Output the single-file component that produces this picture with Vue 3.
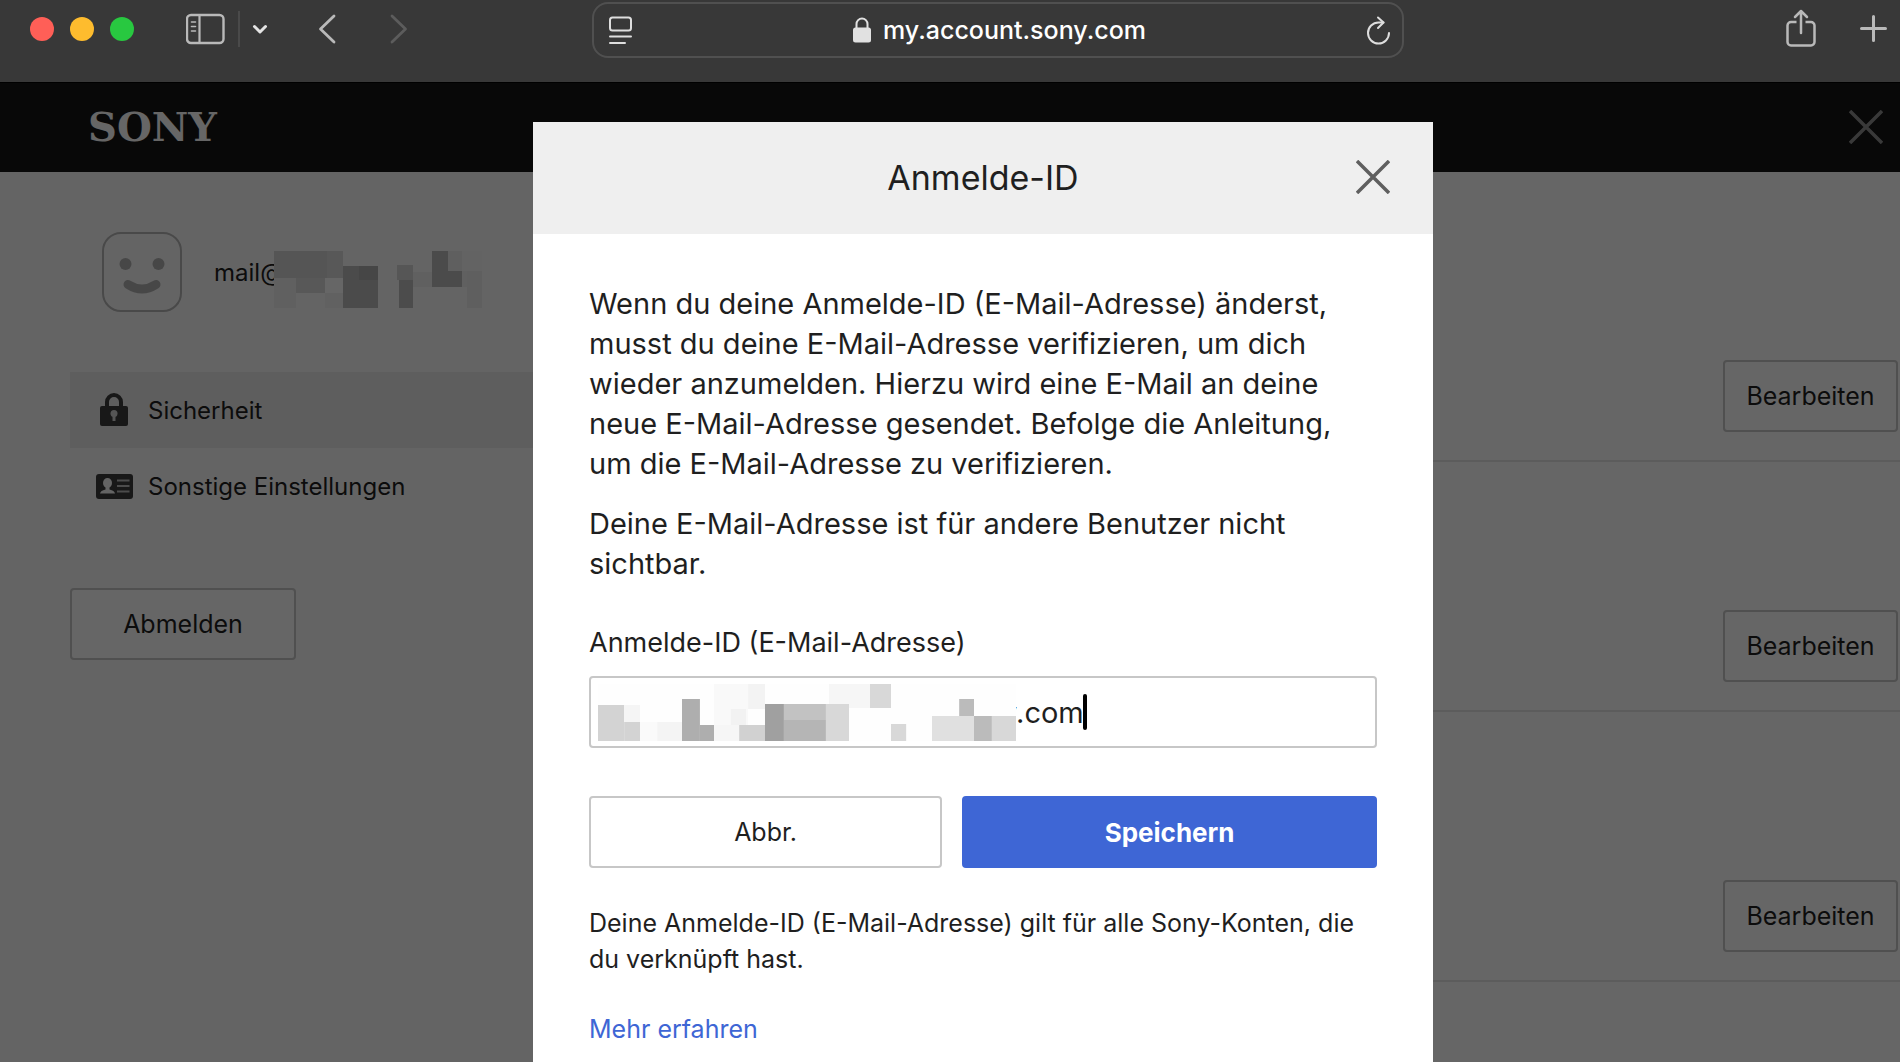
<template>
    <div class="browser">

        <header class="toolbar">
            <div class="traffic">
                <span class="light red"></span>
                <span class="light yellow"></span>
                <span class="light green"></span>
            </div>

            <div class="nav">
                <button class="icon-btn" aria-label="Seitenleiste">
                    <svg width="40" height="32" viewBox="0 0 40 32" fill="none" stroke="#b9b9b9">
                        <rect x="1" y="2" width="36.5" height="28" rx="4" stroke-width="2.4" />
                        <path d="M13.500 2v28" stroke-width="2.2" />
                        <path d="M5.500 9h4M5.500 13.500h4M5.500 18h4" stroke-width="1.6" stroke-linecap="round" />
                    </svg>
                </button>
                <span class="divider"></span>
                <button class="icon-btn" aria-label="Tabgruppen">
                    <svg width="16" height="12" viewBox="0 0 16 12" fill="none" stroke="#e4e4e4" stroke-width="3"
                        stroke-linecap="round" stroke-linejoin="round">
                        <path d="M2.500 3.500l5.500 5.500 5.500-5.500" />
                    </svg>
                </button>
            </div>

            <div class="history">
                <button class="icon-btn" aria-label="Zurück">
                    <svg width="18" height="30" viewBox="0 0 18 30" fill="none" stroke="#b9b9b9" stroke-width="2.800"
                        stroke-linecap="round" stroke-linejoin="round">
                        <path d="M16 2L2.500 15L16 28" />
                    </svg>
                </button>
                <button class="icon-btn" aria-label="Vorwärts" disabled>
                    <svg width="18" height="30" viewBox="0 0 18 30" fill="none" stroke="#5c5c5c" stroke-width="2.800"
                        stroke-linecap="round" stroke-linejoin="round">
                        <path d="M2 2L15.500 15L2 28" />
                    </svg>
                </button>
            </div>

            <div class="address">
                <svg width="24" height="30" viewBox="0 0 24 30" fill="none" stroke="#dedede" stroke-width="2"
                    stroke-linecap="round">
                    <rect x="1" y="2.500" width="21" height="13" rx="2.500" />
                    <path d="M1 21.500h21M1 28h15" />
                </svg>
                <div class="host">
                    <svg width="18" height="26" viewBox="0 0 18 26">
                        <path d="M3.500 12V7a5.500 5.500 0 0 1 11 0v5" fill="none" stroke="#e1e1e1" stroke-width="2" />
                        <rect x="0" y="10.500" width="18" height="15" rx="2.500" fill="#e1e1e1" />
                    </svg>
                    <span>my.account.sony.com</span>
                </div>
                <button class="icon-btn" aria-label="Neu laden">
                    <svg width="24" height="30" viewBox="0 0 24 30" fill="none" stroke="#dedede" stroke-width="2"
                        stroke-linecap="round" stroke-linejoin="round">
                        <path d="M17.500 7.500H12.500A10.500 10.500 0 1 0 23 18" />
                        <path d="M12 2.500l5.500 5-5.500 5.500" />
                    </svg>
                </button>
            </div>

            <div class="actions">
                <button class="icon-btn" aria-label="Teilen">
                    <svg width="30" height="40" viewBox="0 0 30 40" fill="none" stroke="#b9b9b9" stroke-width="2.500"
                        stroke-linecap="round" stroke-linejoin="round">
                        <path d="M10.500 13H5a3.500 3.500 0 0 0-3.500 3.500v16.500A3.500 3.500 0 0 0 5 36.500h20a3.500 3.500 0 0 0 3.500-3.500V16.500a3.500 3.500 0 0 0-3.500-3.500h-5.500"
                            stroke-linecap="butt" />
                        <path d="M15 24V2M9 8l6-6 6 6" />
                    </svg>
                </button>
                <button class="icon-btn" aria-label="Neuer Tab">
                    <svg width="28" height="30" viewBox="0 0 28 30" fill="none" stroke="#b9b9b9" stroke-width="3"
                        stroke-linecap="round">
                        <path d="M13.500 2.500v24M1.500 14.500h24" />
                    </svg>
                </button>
            </div>
        </header>

        <div class="site">
            <div class="site-header">
                <a class="logo" href="#">SONY</a>
                <button class="icon-btn" aria-label="Seite schließen">
                    <svg width="34" height="34" viewBox="0 0 34 34" stroke="#8f8f8f" stroke-width="3.500">
                        <path d="M1 1l32 32M33 1L1 33" />
                    </svg>
                </button>
            </div>

            <div class="site-body">
                <aside class="sidebar">
                    <div class="profile">
                        <svg width="80" height="80" viewBox="0 0 80 80" fill="none">
                            <rect x="1" y="1" width="78" height="78" rx="18" stroke="#b6b6b6" stroke-width="2" />
                            <circle cx="23.500" cy="32" r="6" fill="#b2b2b2" />
                            <circle cx="56.500" cy="32" r="6" fill="#b2b2b2" />
                            <path d="M26 52.500Q40 61.500 54 52.500" stroke="#b2b2b2" stroke-width="9"
                                stroke-linecap="round" />
                        </svg>
                        <div class="account">
                            <span>mail@</span>
                            <svg class="account-mask" width="208" height="57" viewBox="0 0 624 171">
                                <rect width="624" height="171" fill="#fafafa" />
                                <rect v-for="(r, i) in accountBlocks" :key="i" :x="r[0]" :y="r[1]" :width="r[2]"
                                    :height="r[3]" :fill="r[4]" />
                            </svg>
                        </div>
                    </div>

                    <nav class="menu">
                        <a class="menu-item active" href="#">
                            <svg width="38" height="34" viewBox="0 0 38 34">
                                <path d="M12 15V9a7 7 0 0 1 14 0v6" fill="none" stroke="#3c3c3c" stroke-width="4" />
                                <rect x="5" y="13" width="28" height="20" rx="2" fill="#3c3c3c" />
                                <circle cx="19" cy="20.500" r="3.500" fill="#d5d5d5" />
                                <path d="M17.500 22h3v6h-3z" fill="#d5d5d5" />
                            </svg>
                            <span>Sicherheit</span>
                        </a>
                        <a class="menu-item" href="#">
                            <svg width="38" height="26" viewBox="0 0 38 26">
                                <rect x="1" y="1" width="37" height="25" rx="3" fill="#3c3c3c" />
                                <ellipse cx="12.500" cy="10" rx="4.500" ry="5" fill="#fafafa" />
                                <path d="M10.500 13h4v3.500q5 1 5.500 4H5q.5-3 5.500-4z" fill="#fafafa" />
                                <path d="M22 7.500h12.500M22 13h12.500M22 18.500h12.500" stroke="#bdbdbd" stroke-width="2" />
                            </svg>
                            <span>Sonstige Einstellungen</span>
                        </a>
                    </nav>

                    <button class="btn logout">Abmelden</button>
                </aside>

                <main class="settings">
                    <section v-for="row in rows" :key="row" class="setting" :class="row">
                        <button class="btn edit">Bearbeiten</button>
                    </section>
                </main>
            </div>

            <div class="overlay">
                <div class="modal" role="dialog" aria-labelledby="dialog-title">
                    <div class="modal-header">
                        <h1 id="dialog-title">Anmelde-ID</h1>
                        <button class="icon-btn modal-close" aria-label="Schließen">
                            <svg width="34" height="34" viewBox="0 0 34 34" stroke="#5f5f5f" stroke-width="3.500">
                                <path d="M1 1l32 32M33 1L1 33" />
                            </svg>
                        </button>
                    </div>

                    <form class="modal-body" @submit.prevent>
                        <p>Wenn du deine Anmelde-ID (E-Mail-Adresse) änderst, musst du deine E-Mail-Adresse
                            verifizieren, um dich wieder anzumelden. Hierzu wird eine E-Mail an deine neue
                            E-Mail-Adresse gesendet. Befolge die Anleitung, um die E-Mail-Adresse zu verifizieren.</p>
                        <p>Deine E-Mail-Adresse ist für andere Benutzer nicht sichtbar.</p>

                        <label for="login-id">Anmelde-ID (E-Mail-Adresse)</label>
                        <div class="field">
                            <input id="login-id" v-model="loginId" type="text">
                            <svg class="field-mask" width="418" height="57" viewBox="0 0 1214 171"
                                preserveAspectRatio="none">
                                <rect width="1214" height="171" fill="#fefefe" />
                                <rect v-for="(r, i) in fieldBlocks" :key="i" :x="r[0]" :y="r[1]" :width="r[2]"
                                    :height="r[3]" :fill="r[4]" />
                            </svg>
                            <span class="caret"></span>
                        </div>

                        <div class="buttons">
                            <button type="button" class="btn cancel">Abbr.</button>
                            <button type="submit" class="btn save">Speichern</button>
                        </div>

                        <p class="note">Deine Anmelde-ID (E-Mail-Adresse) gilt für alle Sony-Konten, die du verknüpft
                            hast.</p>
                        <a class="more" href="#">Mehr erfahren</a>
                    </form>
                </div>
            </div>
        </div>

    </div>
</template>

<script setup>
import { ref } from 'vue';

const loginId = ref('y.com');

const rows = ['first', 'second', 'third'];

// Pixelated blocks: x, y, width, height, colour
const accountBlocks = [
    [0, 0, 159, 81, '#d4d4d4'],
    [159, 0, 48, 81, '#dcdcdc'],
    [66, 81, 87, 45, '#dcdcdc'],
    [0, 81, 66, 90, '#f0f0f0'],
    [153, 81, 54, 45, '#ffffff'],
    [153, 126, 54, 45, '#f2f2f2'],
    [207, 45, 105, 126, '#bbbbbb'],
    [255, 45, 57, 42, '#afafaf'],
    [369, 42, 48, 45, '#d7d7d7'],
    [375, 87, 42, 84, '#bebebe'],
    [417, 63, 57, 45, '#f0f0f0'],
    [474, 0, 48, 108, '#bbbbbb'],
    [522, 0, 42, 60, '#ededed'],
    [522, 60, 42, 48, '#bbbbbb'],
    [564, 0, 60, 60, '#f7f7f7'],
    [564, 60, 60, 48, '#f0f0f0'],
    [579, 60, 45, 111, '#ededed']
];

const fieldBlocks = [
    [0, 63, 76, 108, '#d3d3d3'],
    [76, 63, 46, 51, '#f5f5f5'],
    [76, 114, 46, 57, '#d3d3d3'],
    [122, 114, 50, 57, '#fafafa'],
    [172, 114, 72, 57, '#f4f4f4'],
    [244, 45, 52, 126, '#aeaeae'],
    [296, 123, 41, 48, '#aeaeae'],
    [337, 0, 99, 123, '#f9f9f9'],
    [436, 0, 49, 75, '#f3f3f3'],
    [386, 75, 44, 48, '#f2f2f2'],
    [337, 123, 73, 48, '#f6f6f6'],
    [410, 123, 75, 48, '#d1d1d1'],
    [671, 0, 119, 72, '#f6f6f6'],
    [485, 60, 55, 111, '#a0a0a0'],
    [540, 60, 122, 48, '#c2c2c2'],
    [540, 108, 122, 63, '#b5b5b5'],
    [662, 60, 67, 111, '#d8d8d8'],
    [790, 0, 61, 72, '#d8d8d8'],
    [851, 120, 44, 51, '#d8d8d8'],
    [970, 96, 122, 75, '#e0e0e0'],
    [1049, 45, 43, 51, '#bbbbbb'],
    [1092, 96, 52, 75, '#bbbbbb'],
    [1144, 96, 70, 75, '#d8d8d8']
];
</script>

<style>
body {
    margin: 0;
    background: #666;
}
</style>

<style scoped>
* {
    box-sizing: border-box;
}

.browser {
    display: flex;
    flex-direction: column;
    height: 100vh;
    overflow: hidden;
    font-family: Inter, 'Liberation Sans', sans-serif;
    color: #1f1f1f;
}

svg {
    display: block;
    flex-shrink: 0;
}

.icon-btn {
    display: flex;
    padding: 0;
    border: none;
    background: none;
    cursor: pointer;
}

/* TOOLBAR */
.toolbar {
    display: flex;
    align-items: center;
    flex-shrink: 0;
    padding: 0 12px 24px 30px;
    background: #383838;
    border-bottom: 1px solid #000;
}

.traffic {
    display: flex;
    gap: 16px;
}

.light {
    width: 24px;
    height: 24px;
    border-radius: 50%;
}

.red {
    background: #ff5f57;
}

.yellow {
    background: #febc2e;
}

.green {
    background: #28c840;
}

.nav {
    display: flex;
    align-items: center;
    gap: 12px;
    margin-left: 52px;
}

.divider {
    width: 2px;
    height: 36px;
    background: #4a4a4a;
}

.history {
    display: flex;
    gap: 54px;
    margin-left: 50px;
}

.address {
    display: flex;
    align-items: center;
    justify-content: space-between;
    flex: 1;
    height: 56px;
    margin: 2px 0 0 184px;
    padding: 0 12px 0 15px;
    border: 2px solid #505050;
    border-radius: 16px;
}

.host {
    display: flex;
    align-items: center;
    gap: 12px;
    color: #fff;
    font-size: 25px;
    font-weight: 500;
}

.actions {
    display: flex;
    align-items: center;
    gap: 44px;
    margin-left: 382px;
}

/* SITE */
.site {
    position: relative;
    display: flex;
    flex-direction: column;
    flex: 1;
    min-height: 0;
}

.site-header {
    display: flex;
    align-items: center;
    justify-content: space-between;
    flex-shrink: 0;
    height: 89px;
    padding: 0 17px 2px 88px;
    background: #141414;
}

.logo {
    color: #fff;
    font-family: 'DejaVu Serif', serif;
    font-size: 40px;
    font-weight: bold;
    line-height: 48px;
    text-decoration: none;
}

.site-body {
    display: flex;
    flex: 1;
    background: #fff;
}

.sidebar {
    flex: 0 0 533px;
    padding: 60px 0 0 70px;
    background: #fafafa;
}

.profile {
    display: flex;
    align-items: center;
    gap: 32px;
    padding-left: 32px;
}

.account {
    position: relative;
    font-size: 24px;
}

.account-mask {
    position: absolute;
    top: -7px;
    left: 60px;
}

.menu {
    margin-top: 60px;
}

.menu-item {
    display: flex;
    align-items: center;
    gap: 15px;
    height: 76px;
    padding-left: 25px;
    color: #1f1f1f;
    font-size: 24px;
    text-decoration: none;
}

.menu-item.active {
    background: #ebebeb;
}

.btn {
    height: 72px;
    padding: 0;
    border: 2px solid #c7c7c7;
    border-radius: 4px;
    background: #fff;
    color: #1f1f1f;
    font-family: inherit;
    font-size: 25px;
    cursor: pointer;
}

.logout {
    width: 226px;
    margin-top: 64px;
}

.settings {
    flex: 1;
}

.setting {
    display: flex;
    justify-content: flex-end;
    padding: 148px 2px 28px 0;
    border-bottom: 2px solid #e6e6e6;
}

.setting.first {
    padding-top: 188px;
}

.setting.third {
    padding-top: 168px;
}

.edit {
    width: 175px;
}

/* DIALOG */
.overlay {
    position: absolute;
    inset: 0;
    display: flex;
    justify-content: center;
    padding: 39px 0 0 66px;
    background: rgba(0, 0, 0, 0.6);
}

.modal {
    width: 900px;
    background: #fff;
}

.modal-header {
    position: relative;
    display: flex;
    align-items: center;
    justify-content: center;
    height: 112px;
    background: #efefef;
}

.modal-header h1 {
    margin: 0;
    font-size: 34px;
    font-weight: 400;
    line-height: 40px;
}

.modal-close {
    position: absolute;
    top: 38px;
    right: 43px;
}

.modal-body {
    display: flex;
    flex-direction: column;
    padding: 50px 56px 0;
}

.modal-body p {
    margin: 0 0 20px;
    font-size: 29px;
    line-height: 40px;
}

.modal-body label {
    margin-top: 19px;
    font-size: 27px;
    line-height: 40px;
}

.field {
    position: relative;
    margin-top: 13px;
}

.field input {
    display: block;
    width: 100%;
    height: 72px;
    padding: 0 16px 0 410px;
    border: 2px solid #c7c7c7;
    border-radius: 4px;
    outline: none;
    color: #1f1f1f;
    font-family: inherit;
    font-size: 29px;
}

.field-mask {
    position: absolute;
    top: 8px;
    left: 9px;
}

.caret {
    position: absolute;
    top: 18px;
    left: 494px;
    width: 4px;
    height: 36px;
    border-radius: 2px;
    background: #000;
}

.buttons {
    display: flex;
    gap: 20px;
    margin-top: 48px;
}

.cancel {
    flex: 17;
}

.save {
    flex: 20;
    border-color: #3e66d5;
    background: #3e66d5;
    color: #fff;
    font-size: 26px;
    font-weight: 700;
}

.modal-body .note {
    margin: 37px 0 34px;
    font-size: 25px;
    line-height: 36px;
}

.more {
    color: #3e66d5;
    font-size: 25px;
    line-height: 36px;
    text-decoration: none;
}
</style>
